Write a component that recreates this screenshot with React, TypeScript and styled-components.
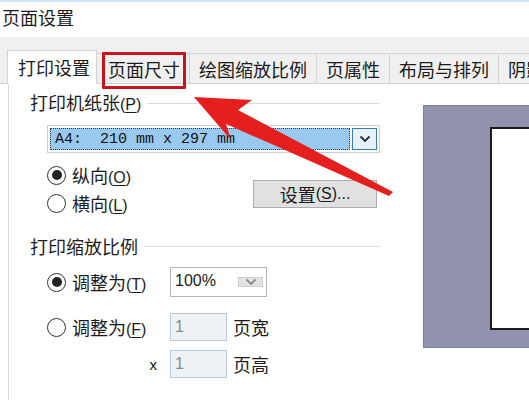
import React from "react";
import styled, { createGlobalStyle } from "styled-components";

const GlobalStyle = createGlobalStyle`
  html, body { margin: 0; padding: 0; background: #ffffff; }
  body {
    width: 529px; height: 400px; overflow: hidden;
    font-family: "Noto Sans CJK SC", "Noto Sans", sans-serif;
    color: #1b1b1b;
  }
  * { box-sizing: border-box; }
`;

const Page = styled.div`
  position: relative;
  width: 529px;
  height: 400px;
  overflow: hidden;
  display: flex;
  flex-direction: column;
`;

const TitleBar = styled.div`
  height: 37px;
  flex: none;
  border-top: 2px solid #d3e6f6;
  padding: 5px 0 0 2px;
  font-size: 18px;
  line-height: 20px;
  background: #ffffff;
`;

const TabBand = styled.div`
  height: 47px;
  flex: none;
  background: #f0f0f0;
  border-bottom: 1px solid #d4d4d4;
  padding-left: 7px;
  display: flex;
  align-items: flex-end;
`;

const Tab = styled.div<{ $active?: boolean; $padL?: number }>`
  position: relative;
  flex: none;
  display: flex;
  align-items: center;
  font-size: 18px;
  line-height: 20px;
  white-space: nowrap;
  border-top: 1px solid #d4d4d4;
  border-right: 1px solid #d4d4d4;
  ${(p) =>
    p.$active
      ? `
    height: 34px;
    margin-bottom: -1px;
    background: #ffffff;
    border-left: 1px solid #d4d4d4;
    padding: 0 6px 2px 10px;
    z-index: 1;
  `
      : `
    height: 30px;
    background: #f0f0f0;
    padding: 0 9px 0 ${p.$padL ?? 9}px;
  `}
`;

const Highlight = styled.span`
  position: absolute;
  left: 5px;
  right: 3px;
  top: -2px;
  bottom: -6px;
  border: 3px solid #c8151d;
  border-radius: 1px;
  pointer-events: none;
`;

const Panel = styled.div`
  flex: 1;
  margin-left: 8px;
  background: #ffffff;
  border-left: 1px solid #d9d9d9;
  display: flex;
  align-items: flex-start;
`;

const LeftCol = styled.div`
  width: 371px;
  flex: none;
  padding: 9px 0 0 21px;
  display: flex;
  flex-direction: column;
`;

const GroupHeader = styled.div<{ $mt?: number }>`
  display: flex;
  align-items: center;
  height: 20px;
  font-size: 18px;
  line-height: 20px;
  margin-top: ${(p) => p.$mt ?? 0}px;
  white-space: nowrap;
`;

const Rule = styled.div`
  flex: 1;
  height: 1px;
  background: #dcdcdc;
  margin-left: 6px;
`;

const Mn = styled.span`
  font-family: "Liberation Sans", sans-serif;
  font-size: 16px;
  u { text-decoration-thickness: 1px; text-underline-offset: 2px; }
`;

const GroupBody = styled.div`
  padding-left: 17px;
  display: flex;
  flex-direction: column;
`;

const PaperSelect = styled.div`
  margin-top: 12px;
  width: 333px;
  height: 28px;
  border: 1px solid #c3cfdb;
  background: #ffffff;
  padding: 2px;
  display: flex;
  gap: 2px;
`;

const PaperValue = styled.div`
  flex: 1;
  background: #99c9ef;
  border: 1px dotted #3a3a3a;
  display: flex;
  align-items: center;
  padding-left: 4px;
  font-family: "Liberation Mono", monospace;
  font-size: 15px;
  white-space: pre;
  color: #111;
`;

const DropBtn = styled.div<{ $blue?: boolean }>`
  flex: none;
  width: 25px;
  display: flex;
  align-items: center;
  justify-content: center;
  border: 1px solid ${(p) => (p.$blue ? "#3c7fb1" : "#cfcfcf")};
  background: ${(p) => (p.$blue ? "#e5f1fb" : "#e3e3e3")};
`;

const OptionsRow = styled.div`
  margin-top: 8px;
  display: flex;
  align-items: flex-start;
  width: 333px;
`;

const RadioCol = styled.div`
  display: flex;
  flex-direction: column;
`;

const RadioLine = styled.div`
  height: 28px;
  display: flex;
  align-items: center;
  gap: 6px;
  font-size: 18px;
  white-space: nowrap;
`;

const RadioDot = styled.span<{ $on?: boolean }>`
  width: 19px;
  height: 19px;
  border-radius: 50%;
  border: 1.5px solid #333;
  background: #fff;
  display: flex;
  align-items: center;
  justify-content: center;
  flex: none;
  &::after {
    content: "";
    width: 10px;
    height: 10px;
    border-radius: 50%;
    background: ${(p) => (p.$on ? "#222" : "transparent")};
  }
`;

const SetupButton = styled.div`
  margin-left: auto;
  margin-top: 19px;
  margin-right: 3px;
  width: 124px;
  height: 28px;
  border: 1px solid #adadad;
  background: #e1e1e1;
  display: flex;
  align-items: center;
  justify-content: center;
  font-size: 18px;
  white-space: nowrap;
`;

const ScaleRow = styled.div<{ $mt: number }>`
  margin-top: ${(p) => p.$mt}px;
  display: flex;
  align-items: center;
  font-size: 18px;
`;

const RowLabel = styled.div<{ $right?: boolean }>`
  width: 123px;
  flex: none;
  display: flex;
  align-items: center;
  gap: 6px;
  justify-content: ${(p) => (p.$right ? "flex-end" : "flex-start")};
  padding-right: ${(p) => (p.$right ? 13 : 0)}px;
  white-space: nowrap;
`;

const XMark = styled.span`
  font-family: "Liberation Sans", sans-serif;
  font-size: 15px;
`;

const PercentSelect = styled.div`
  width: 97px;
  height: 30px;
  border: 1px solid #b4b4b4;
  background: #fff;
  display: flex;
  padding: 4px 3px 4px 4px;
  font-family: "Liberation Sans", sans-serif;
  font-size: 16px;
  align-items: center;
`;

const PercentText = styled.span`
  flex: 1;
  align-self: flex-start;
  line-height: 18px;
`;

const NumBox = styled.div`
  width: 57px;
  height: 28px;
  border: 1px solid #bccbd9;
  background: #eef2f7;
  display: flex;
  align-items: center;
  padding-left: 4px;
  font-family: "Liberation Sans", sans-serif;
  font-size: 16px;
  color: #8a8a8a;
  margin-right: 6px;
`;

const Preview = styled.div`
  flex: none;
  margin-top: 21px;
  margin-left: 43px;
  width: 200px;
  height: 243px;
  background: #9192ad;
  border: 1px solid #7f8098;
  padding: 21px 0 0 66px;
`;

const Sheet = styled.div`
  height: 203px;
  background: #ffffff;
  border: 2px solid #1a1a1a;
  border-right: none;
`;

const ArrowLayer = styled.svg`
  position: absolute;
  left: 0;
  top: 0;
  pointer-events: none;
`;

const Chevron = ({ color }: { color: string }) => (
  <svg width="12" height="8" viewBox="0 0 12 8">
    <path d="M1.5 1.5 L6 6 L10.5 1.5" fill="none" stroke={color} strokeWidth="1.8" />
  </svg>
);

const Radio = ({ on, label, k }: { on?: boolean; label: string; k: string }) => (
  <>
    <RadioDot $on={on} />
    <span>
      {label}
      <Mn>
        (<u>{k}</u>)
      </Mn>
    </span>
  </>
);

export default function App() {
  return (
    <>
      <GlobalStyle />
      <Page>
        <TitleBar>页面设置</TitleBar>
        <TabBand>
          <Tab $active>打印设置</Tab>
          <Tab $padL={11}>
            页面尺寸
            <Highlight />
          </Tab>
          <Tab>绘图缩放比例</Tab>
          <Tab>页属性</Tab>
          <Tab>布局与排列</Tab>
          <Tab>阴影</Tab>
        </TabBand>
        <Panel>
          <LeftCol>
            <GroupHeader>
              <span>
                打印机纸张
                <Mn>
                  (<u>P</u>)
                </Mn>
              </span>
              <Rule />
            </GroupHeader>
            <GroupBody>
              <PaperSelect>
                <PaperValue>{"A4:  210 mm x 297 mm"}</PaperValue>
                <DropBtn $blue>
                  <Chevron color="#1e2a36" />
                </DropBtn>
              </PaperSelect>
              <OptionsRow>
                <RadioCol>
                  <RadioLine>
                    <Radio on label="纵向" k="O" />
                  </RadioLine>
                  <RadioLine>
                    <Radio label="横向" k="L" />
                  </RadioLine>
                </RadioCol>
                <SetupButton>
                  设置
                  <Mn>
                    (<u>S</u>)...
                  </Mn>
                </SetupButton>
              </OptionsRow>
            </GroupBody>
            <GroupHeader $mt={19}>
              <span>打印缩放比例</span>
              <Rule />
            </GroupHeader>
            <GroupBody>
              <ScaleRow $mt={11}>
                <RowLabel>
                  <Radio on label="调整为" k="T" />
                </RowLabel>
                <PercentSelect>
                  <PercentText>100%</PercentText>
                  <DropBtn>
                    <Chevron color="#8a8a8a" />
                  </DropBtn>
                </PercentSelect>
              </ScaleRow>
              <ScaleRow $mt={16}>
                <RowLabel>
                  <Radio label="调整为" k="F" />
                </RowLabel>
                <NumBox>1</NumBox>
                <span>页宽</span>
              </ScaleRow>
              <ScaleRow $mt={9}>
                <RowLabel $right>
                  <XMark>x</XMark>
                </RowLabel>
                <NumBox>1</NumBox>
                <span>页高</span>
              </ScaleRow>
            </GroupBody>
          </LeftCol>
          <Preview>
            <Sheet />
          </Preview>
        </Panel>
        <ArrowLayer width="529" height="400" viewBox="0 0 529 400">
          <polygon
            points="194,97 252,100 238,110 393,192 389,196 226,124 231,140"
            fill="#e51e1e"
          />
        </ArrowLayer>
      </Page>
    </>
  );
}
